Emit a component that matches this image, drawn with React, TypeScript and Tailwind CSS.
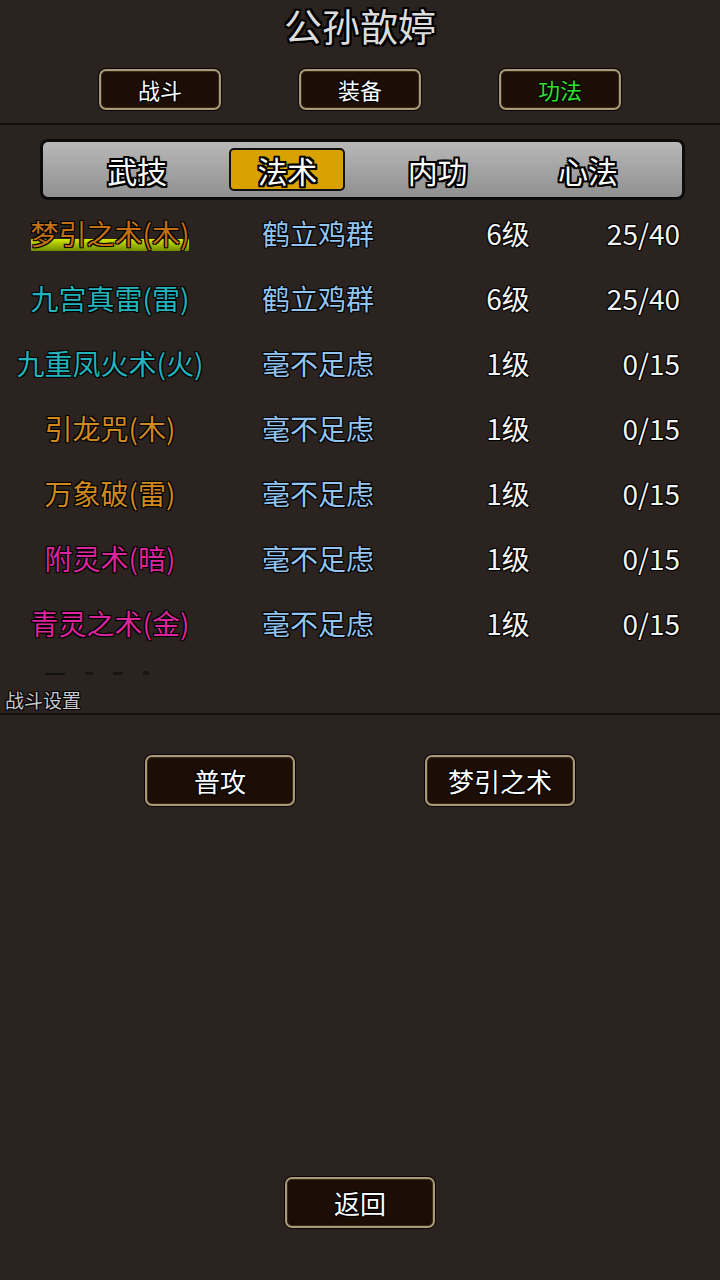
const outline =
  "[text-shadow:-1px_-1px_0_#000,1px_-1px_0_#000,-1px_1px_0_#000,1px_1px_0_#000,0_0_2px_#000]";
const thickOutline =
  "[text-shadow:-2px_-2px_0_#000,2px_-2px_0_#000,-2px_2px_0_#000,2px_2px_0_#000,0_-2px_0_#000,0_2px_0_#000,-2px_0_0_#000,2px_0_0_#000]";

type Skill = {
  name: string;
  color: string;
  rank: string;
  level: string;
  exp: string;
  active?: boolean;
};

const skills: Skill[] = [
  { name: "梦引之术(木)", color: "text-[#c46f14]", rank: "鹤立鸡群", level: "6级", exp: "25/40", active: true },
  { name: "九宫真雷(雷)", color: "text-[#22b3bd]", rank: "鹤立鸡群", level: "6级", exp: "25/40" },
  { name: "九重凤火术(火)", color: "text-[#22b3bd]", rank: "毫不足虑", level: "1级", exp: "0/15" },
  { name: "引龙咒(木)", color: "text-[#d0891f]", rank: "毫不足虑", level: "1级", exp: "0/15" },
  { name: "万象破(雷)", color: "text-[#d0891f]", rank: "毫不足虑", level: "1级", exp: "0/15" },
  { name: "附灵术(暗)", color: "text-[#dc249c]", rank: "毫不足虑", level: "1级", exp: "0/15" },
  { name: "青灵之术(金)", color: "text-[#dc249c]", rank: "毫不足虑", level: "1级", exp: "0/15" },
];

const tabs = ["武技", "法术", "内功", "心法"];

function WoodButton({
  label,
  className,
  textClass,
}: {
  label: string;
  className: string;
  textClass: string;
}) {
  return (
    <button
      className={`flex items-center justify-center rounded-[7px] border-2 border-[#a8997b] bg-[#1d0e05] shadow-[0_0_0_1px_#0b0604,inset_0_0_0_1px_#3a2a1c] ${className}`}
    >
      <span className={`${textClass} ${outline}`}>{label}</span>
    </button>
  );
}

export default function App() {
  return (
    <div
      className="flex h-[1280px] w-[720px] flex-col overflow-hidden bg-[#2a231f]"
      style={{ fontFamily: '"Noto Sans CJK SC", "Noto Sans", sans-serif' }}
    >
      {/* Title */}
      <div className="flex h-[50px] items-center justify-center">
        <h1 className={`text-[38px] leading-[50px] text-[#dcdcdc] ${thickOutline}`}>公孙歆婷</h1>
      </div>

      {/* Top buttons */}
      <div className="mt-[19px] flex justify-center gap-[78px]">
        <WoodButton label="战斗" className="h-[41px] w-[122px]" textClass="text-[22px] text-white" />
        <WoodButton label="装备" className="h-[41px] w-[122px]" textClass="text-[22px] text-white" />
        <WoodButton label="功法" className="h-[41px] w-[122px]" textClass="text-[22px] text-[#2fe02f]" />
      </div>

      <div className="mt-[13px] h-[2px] w-full bg-[#141010]" />

      {/* Tab bar */}
      <div className="mx-[40px] mt-[14px] h-[61px] w-[645px] rounded-[8px] border-[3px] border-[#0c0c0c] bg-gradient-to-b from-[#b8b8b8] to-[#909090] px-[19px]">
        <div className="grid h-full grid-cols-4 items-center">
          {tabs.map((t, i) => (
            <div key={t} className="flex justify-center">
              {i === 1 ? (
                <div className="flex h-[43px] w-[116px] items-center justify-center rounded-[5px] border-2 border-[#111] bg-[#d9a200]">
                  <span className={`text-[30px] leading-none text-white ${thickOutline}`}>{t}</span>
                </div>
              ) : (
                <span className={`text-[30px] leading-none text-white ${thickOutline}`}>{t}</span>
              )}
            </div>
          ))}
        </div>
      </div>

      <div className="h-[475px] overflow-hidden">
        {skills.map((s) => (
          <div key={s.name} className="flex h-[65px] items-center pr-[40px] text-[28px] leading-none">
            <div className="flex w-[220px] justify-center">
              <span className={`relative ${s.color}`}>
                {s.active && (
                  <span className="absolute inset-x-0 bottom-[-4px] h-[12px] rounded-[1px] bg-gradient-to-b from-[#d6ea00] to-[#6f8d00]" />
                )}
                <span className={`relative ${outline}`}>{s.name}</span>
              </span>
            </div>
            <div className="ml-[42px] w-[200px]">
              <span className={`text-[#92c4f0] ${outline}`}>{s.rank}</span>
            </div>
            <div className="flex w-[92px] justify-center">
              <span className={`text-[#f4f4f4] ${outline}`}>{s.level}</span>
            </div>
            <div className="flex flex-1 justify-end">
              <span className={`text-[#f4f4f4] ${outline}`}>{s.exp}</span>
            </div>
          </div>
        ))}
        <div className="flex h-[20px] items-end gap-[20px] pl-[45px]">
          <span className="h-[2px] w-[20px] bg-[#111]" />
          <span className="h-[3px] w-[8px] bg-[#1a1412]" />
          <span className="h-[3px] w-[10px] bg-[#1a1412]" />
          <span className="h-[4px] w-[6px] bg-[#1a1412]" />
        </div>
      </div>

      {/* Battle settings */}
      <div className="mt-[13px] h-[24px] pl-[5px]">
        <span className={`text-[19px] leading-[24px] text-[#c9c9c9] ${outline}`}>战斗设置</span>
      </div>
      <div className="mt-[1px] h-[2px] w-full bg-[#141010]" />

      <div className="mt-[40px] flex justify-center gap-[130px]">
        <WoodButton label="普攻" className="h-[51px] w-[150px]" textClass="text-[26px] text-white" />
        <WoodButton label="梦引之术" className="h-[51px] w-[150px]" textClass="text-[26px] text-white" />
      </div>

      <div className="flex-1" />

      <div className="flex justify-center pb-[52px]">
        <WoodButton label="返回" className="h-[51px] w-[150px]" textClass="text-[26px] text-white" />
      </div>
    </div>
  );
}
